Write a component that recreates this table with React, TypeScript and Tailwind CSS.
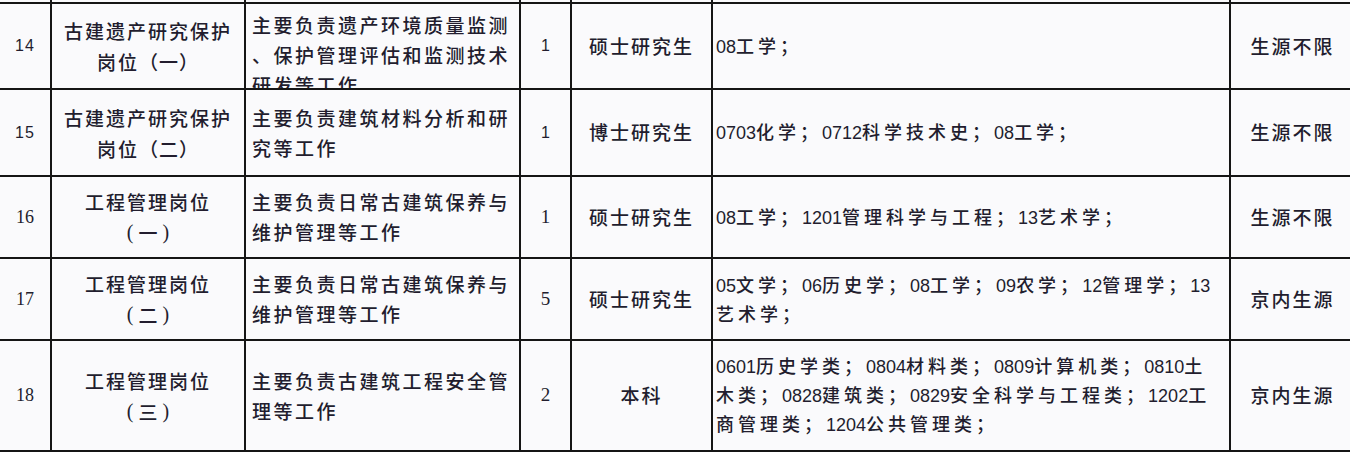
import React from "react";

const GRID = "grid grid-cols-[52px_194px_275px_51px_141px_518px_119px]";
const CELL = "border-r-2 border-[#151515] flex items-center justify-center overflow-hidden";

function Mixed({ text }: { text: string }) {
  const parts = text.split(/(\d+)/).filter((p) => p.length > 0);
  return (
    <>
      {parts.map((p, i) =>
        /^\d+$/.test(p) ? (
          <span key={i} className="font-['Liberation_Sans',sans-serif] font-normal text-[18px] tracking-normal">
            {p}
          </span>
        ) : (
          <span key={i} className="text-[18px] tracking-[4px]">
            {p}
          </span>
        )
      )}
    </>
  );
}

type Row = {
  no: string;
  serif: boolean;
  h: string;
  name: string;
  paren: string;
  inline: boolean;
  duty: string[];
  dutyTop?: boolean;
  count: string;
  edu: string;
  major: string[];
  src: string;
};

const rows: Row[] = [
  {
    no: "14",
    serif: false,
    h: "h-[86px]",
    name: "古建遗产研究保护",
    paren: "一",
    inline: true,
    duty: ["主要负责遗产环境质量监测", "、保护管理评估和监测技术", "研发等工作"],
    dutyTop: true,
    count: "1",
    edu: "硕士研究生",
    major: ["08工学；"],
    src: "生源不限",
  },
  {
    no: "15",
    serif: false,
    h: "h-[87px]",
    name: "古建遗产研究保护",
    paren: "二",
    inline: true,
    duty: ["主要负责建筑材料分析和研", "究等工作"],
    count: "1",
    edu: "博士研究生",
    major: ["0703化学；0712科学技术史；08工学；"],
    src: "生源不限",
  },
  {
    no: "16",
    serif: true,
    h: "h-[82px]",
    name: "工程管理岗位",
    paren: "一",
    inline: false,
    duty: ["主要负责日常古建筑保养与", "维护管理等工作"],
    count: "1",
    edu: "硕士研究生",
    major: ["08工学；1201管理科学与工程；13艺术学；"],
    src: "生源不限",
  },
  {
    no: "17",
    serif: true,
    h: "h-[82px]",
    name: "工程管理岗位",
    paren: "二",
    inline: false,
    duty: ["主要负责日常古建筑保养与", "维护管理等工作"],
    count: "5",
    edu: "硕士研究生",
    major: ["05文学；06历史学；08工学；09农学；12管理学；13", "艺术学；"],
    src: "京内生源",
  },
  {
    no: "18",
    serif: true,
    h: "h-[111px]",
    name: "工程管理岗位",
    paren: "三",
    inline: false,
    duty: ["主要负责古建筑工程安全管", "理等工作"],
    count: "2",
    edu: "本科",
    major: [
      "0601历史学类；0804材料类；0809计算机类；0810土",
      "木类；0828建筑类；0829安全科学与工程类；1202工",
      "商管理类；1204公共管理类；",
    ],
    src: "京内生源",
  },
];

function NameCell({ r }: { r: Row }) {
  if (r.inline) {
    return (
      <>
        <div className="tracking-[2px] whitespace-nowrap">{r.name}</div>
        <div className="whitespace-nowrap">
          <span className="tracking-[2px]">岗位</span>
          <span className="tracking-[1px]">（{r.paren}）</span>
        </div>
      </>
    );
  }
  return (
    <>
      <div className="tracking-[2px] whitespace-nowrap">{r.name}</div>
      <div className="whitespace-nowrap flex items-center">
        <span className="font-['Liberation_Serif',serif] font-normal text-[20px]">(</span>
        <span className="mx-[5px]">{r.paren}</span>
        <span className="font-['Liberation_Serif',serif] font-normal text-[20px]">)</span>
      </div>
    </>
  );
}

export default function App() {
  return (
    <div className="w-[1350px] h-[452px] overflow-hidden bg-[#fafafc] text-[#221d2e] font-medium font-['Noto_Sans_CJK_SC','Liberation_Sans',sans-serif]">
      {/* remnant of previous row */}
      <div className={`${GRID} h-[2px]`}>
        <div className={CELL} />
        <div className={CELL} />
        <div className={CELL} />
        <div className={CELL} />
        <div className={CELL} />
        <div className={CELL} />
        <div />
      </div>
      {rows.map((r) => (
        <div key={r.no} className={`${GRID} ${r.h} border-t-2 border-[#151515]`}>
          <div className={CELL}>
            <span
              className={
                r.serif
                  ? "font-['Liberation_Serif',serif] font-normal text-[18px]"
                  : "font-['Liberation_Sans',sans-serif] font-normal text-[16px] tracking-[1px]"
              }
            >
              {r.no}
            </span>
          </div>
          <div className={`${CELL} flex-col text-[19px] leading-[31px] text-center`}>
            <NameCell r={r} />
          </div>
          <div
            className={`${CELL} flex-col !items-start text-[19px] leading-[30px] tracking-[2.5px] pl-[6px] ${
              r.dutyTop ? "!justify-start pt-[6px]" : ""
            }`}
          >
            {r.duty.map((l, i) => (
              <div key={i} className="whitespace-nowrap">
                {l}
              </div>
            ))}
          </div>
          <div className={CELL}>
            <span
              className={
                r.serif
                  ? "font-['Liberation_Serif',serif] font-normal text-[19px]"
                  : "font-['Liberation_Sans',sans-serif] font-normal text-[16px]"
              }
            >
              {r.count}
            </span>
          </div>
          <div className={`${CELL} text-[19px] tracking-[2px]`}>{r.edu}</div>
          <div className={`${CELL} flex-col !items-start pl-[3px] leading-[27px]`}>
            {r.major.map((l, i) => (
              <div key={i} className="whitespace-nowrap">
                <Mixed text={l} />
              </div>
            ))}
          </div>
          <div className="flex items-center justify-center text-[19px] tracking-[2px] pl-[4px]">{r.src}</div>
        </div>
      ))}
      <div className="h-[2px] bg-[#151515]" />
    </div>
  );
}
